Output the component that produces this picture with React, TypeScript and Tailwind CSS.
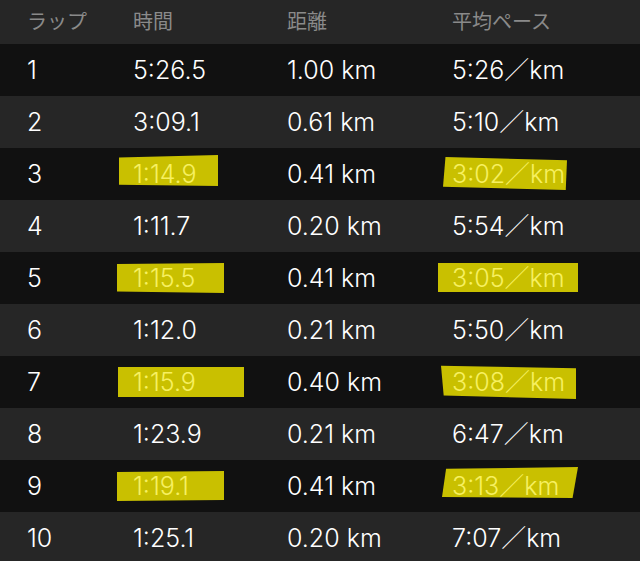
import React from 'react';

type Mark = { left: number; top: number; width: number; height: number; clip: string };

interface Lap {
  lap: string;
  time: string;
  distance: string;
  pace: string;
  timeMark?: Mark;
  paceMark?: Mark;
}

// highlighter strokes, relative to the cell's top-left
const laps: Lap[] = [
  { lap: '1', time: '5:26.5', distance: '1.00 km', pace: '5:26／km' },
  { lap: '2', time: '3:09.1', distance: '0.61 km', pace: '5:10／km' },
  {
    lap: '3', time: '1:14.9', distance: '0.41 km', pace: '3:02／km',
    timeMark: { left: -14, top: 7, width: 99, height: 31, clip: 'polygon(0 8%, 100% 0, 100% 100%, 0 96%)' },
    paceMark: { left: -9, top: 9, width: 124, height: 33, clip: 'polygon(2% 0, 100% 10%, 99% 100%, 0 90%)' },
  },
  { lap: '4', time: '1:11.7', distance: '0.20 km', pace: '5:54／km' },
  {
    lap: '5', time: '1:15.5', distance: '0.41 km', pace: '3:05／km',
    timeMark: { left: -16, top: 11, width: 107, height: 30, clip: 'polygon(0 3%, 100% 0, 100% 100%, 0 95%)' },
    paceMark: { left: -14, top: 11, width: 140, height: 29, clip: 'polygon(0 0, 100% 0, 100% 100%, 0 100%)' },
  },
  { lap: '6', time: '1:12.0', distance: '0.21 km', pace: '5:50／km' },
  {
    lap: '7', time: '1:15.9', distance: '0.40 km', pace: '3:08／km',
    timeMark: { left: -15, top: 11, width: 126, height: 30, clip: 'polygon(0 0, 100% 0, 100% 100%, 0 100%)' },
    paceMark: { left: -11, top: 8, width: 135, height: 35, clip: 'polygon(0 5%, 100% 12%, 100% 100%, 2% 90%)' },
  },
  { lap: '8', time: '1:23.9', distance: '0.21 km', pace: '6:47／km' },
  {
    lap: '9', time: '1:19.1', distance: '0.41 km', pace: '3:13／km',
    timeMark: { left: -16, top: 11, width: 107, height: 30, clip: 'polygon(0 3%, 100% 0, 100% 97%, 0 100%)' },
    paceMark: { left: -10, top: 7, width: 136, height: 31, clip: 'polygon(3% 6%, 100% 0, 96% 100%, 0 97%)' },
  },
  { lap: '10', time: '1:25.1', distance: '0.20 km', pace: '7:07／km' },
];

const font = { fontFamily: "Inter, 'Noto Sans CJK JP', sans-serif" };

function Cell({ text, mark }: { text: string; mark?: Mark }) {
  return (
    <div className="relative h-full flex items-center">
      {mark && (
        <span
          className="absolute bg-[#c9c000]"
          style={{ left: mark.left, top: mark.top, width: mark.width, height: mark.height, clipPath: mark.clip }}
        />
      )}
      <span className={`relative whitespace-nowrap pt-[2px] ${mark ? 'text-[#f7f060]' : 'text-white'}`}>{text}</span>
    </div>
  );
}

export default function App() {
  return (
    <div className="w-[640px] h-[561px] overflow-hidden bg-[#111111]" style={font}>
      {/* header */}
      <div className="grid grid-cols-[106px_154px_165px_1fr] pl-[27px] h-[44px] items-center bg-[#262626] text-[20px] text-[#8a8a8a]">
        <div>ラップ</div>
        <div>時間</div>
        <div>距離</div>
        <div>平均ペース</div>
      </div>

      {/* laps */}
      {laps.map((l, i) => (
        <div
          key={l.lap}
          className={`grid grid-cols-[106px_154px_165px_1fr] pl-[27px] h-[52px] text-[25px] font-light ${
            i % 2 === 0 ? 'bg-[#111111]' : 'bg-[#262626]'
          }`}
        >
          <Cell text={l.lap} />
          <Cell text={l.time} mark={l.timeMark} />
          <Cell text={l.distance} />
          <Cell text={l.pace} mark={l.paceMark} />
        </div>
      ))}
    </div>
  );
}
